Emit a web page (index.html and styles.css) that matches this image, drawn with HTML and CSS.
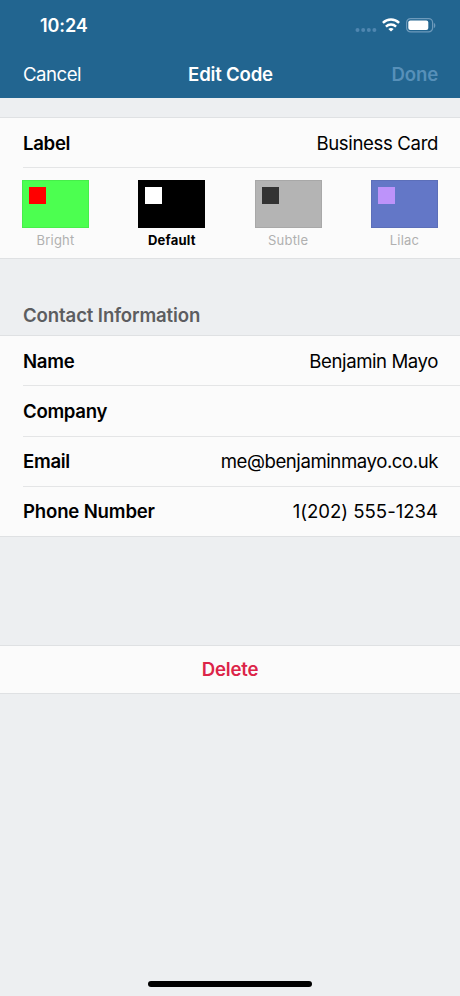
FILE: index.html
```html
<!DOCTYPE html>
<html lang="en">
<head>
<meta charset="utf-8">
<title>Edit Code</title>
<link rel="stylesheet" href="styles.css">
</head>
<body>
<div class="screen">
  <header class="header">
    <div class="status">
      <span class="time">10:24</span>
      <div class="indicators">
        <svg class="signal" width="22" height="16" viewBox="0 0 22 16"><g fill="#4f86b0"><circle cx="2.5" cy="12" r="2"/><circle cx="8.2" cy="12" r="2"/><circle cx="13.8" cy="12" r="2"/><circle cx="19.4" cy="12" r="2"/></g></svg>
        <svg class="wifi" width="18" height="14" viewBox="0 0 18 14"><g fill="none" stroke="#fff" stroke-width="2.4"><path d="M.9 4.9C5.5.4 12.500.4 17.100 4.900"/><path d="M3.900 8.600C6.800 5.800 11.200 5.800 14.100 8.600"/></g><path d="M9 13.600 6.300 11Q9 8.800 11.700 11Z" fill="#fff"/></svg>
        <svg class="battery" width="30" height="15" viewBox="0 0 30 15"><rect x=".6" y=".6" width="26" height="13.300" rx="4" fill="none" stroke="#6d9abb" stroke-width="1.200"/><rect x="2.300" y="2.500" width="20" height="9.500" rx="2" fill="#fff"/><path d="M27.900 5c1.900.6 1.900 4.400 0 5Z" fill="#6d9abb"/></svg>
      </div>
    </div>
    <nav class="nav">
      <span class="cancel">Cancel</span>
      <h1 class="title">Edit Code</h1>
      <span class="done">Done</span>
    </nav>
  </header>
  <main>
    <section class="group appearance">
      <div class="row"><span class="key">Label</span><span class="value">Business Card</span></div>
      <div class="swatches">
        <div class="swatch bright"><div class="card"><i></i></div><span>Bright</span></div>
        <div class="swatch default selected"><div class="card"><i></i></div><span>Default</span></div>
        <div class="swatch subtle"><div class="card"><i></i></div><span>Subtle</span></div>
        <div class="swatch lilac"><div class="card"><i></i></div><span>Lilac</span></div>
      </div>
    </section>
    <h2 class="heading">Contact Information</h2>
    <section class="group contact">
      <div class="row"><span class="key">Name</span><span class="value name">Benjamin Mayo</span></div>
      <div class="row"><span class="key">Company</span></div>
      <div class="row"><span class="key">Email</span><span class="value email">me@benjaminmayo.co.uk</span></div>
      <div class="row"><span class="key wide">Phone Number</span><span class="value phone">1(202) 555-1234</span></div>
    </section>
    <section class="group delete">Delete</section>
  </main>
  <div class="home"></div>
</div>
</body>
</html>
```
FILE: styles.css
```css
* { box-sizing: border-box; }
body {
  margin: 0;
  background: #edeff1;
  color: #000;
  font-family: Inter, "Liberation Sans", sans-serif;
  font-size: 18.6px;
  line-height: 24px;
}
.screen { width: 460px; height: 996px; display: flex; flex-direction: column; }
.header { height: 98px; background: #226590; color: #fff; }
.status { height: 50px; padding: 2px 24px 0 40px; display: flex; align-items: center; justify-content: space-between; }
.time { font-size: 18px; font-weight: 600; letter-spacing: -.1px; }
.indicators { display: flex; align-items: center; }
.signal { margin-top: 0; }
.wifi { margin: -2px 6px 0 5px; }
.battery { margin-top: -1px; }
.nav { height: 48px; padding: 0 22px 0 23px; display: grid; grid-template-columns: 1fr auto 1fr; align-items: center; }
.cancel { letter-spacing: -.5px; }
.title { margin: 0; font-size: 18.6px; font-weight: 600; letter-spacing: -.2px; }
.done { justify-self: end; font-weight: 600; letter-spacing: -.15px; color: #5790b9; }
.group { background: #fbfbfb; border-top: 1px solid #dfe1e3; border-bottom: 1px solid #dfe1e3; }
.appearance { height: 142px; margin-top: 19px; }
.row { height: 50.3px; margin-left: 23px; padding-right: 22px; display: flex; align-items: center; justify-content: space-between; border-bottom: 1px solid #e4e5e6; }
.contact .row:last-child { border-bottom: 0; padding-bottom: 2px; }
.key { font-weight: 600; letter-spacing: -.3px; }
.key.wide { letter-spacing: -.18px; }
.value { letter-spacing: -.36px; }
.name { letter-spacing: -.42px; }
.email { letter-spacing: -.43px; }
.phone { letter-spacing: -.02px; }
.swatches { display: flex; justify-content: space-between; padding: 12px 22px 0; }
.swatch { width: 67px; display: flex; flex-direction: column; align-items: center; font-size: 13px; line-height: 16px; color: #b0b0b0; letter-spacing: .2px; }
.card { width: 67px; height: 48px; padding: 6px; margin-bottom: 4px; border: 1px solid #0001; }
.card i { display: block; width: 17px; height: 17px; }
.bright .card { background: #4cff50; }
.bright i { background: #f00; }
.default .card { background: #000; }
.default i { background: #fff; }
.subtle .card { background: #b4b4b4; }
.subtle i { background: #333; }
.lilac .card { background: #6377c7; }
.lilac i { background: #bd93fa; }
.selected { color: #000; font-weight: 700; }
.heading { margin: 0; height: 76px; padding: 44px 23px 0; font-size: 18.6px; font-weight: 600; letter-spacing: -.12px; color: #5c5d60; }
.contact { height: 202px; }
.delete { height: 49px; margin-top: 108px; padding-bottom: 2px; display: flex; align-items: center; justify-content: center; font-weight: 600; letter-spacing: -.2px; color: #dc2448; }
.home { width: 164px; height: 6px; margin: auto auto 9px; border-radius: 3px; background: #000; }
```
